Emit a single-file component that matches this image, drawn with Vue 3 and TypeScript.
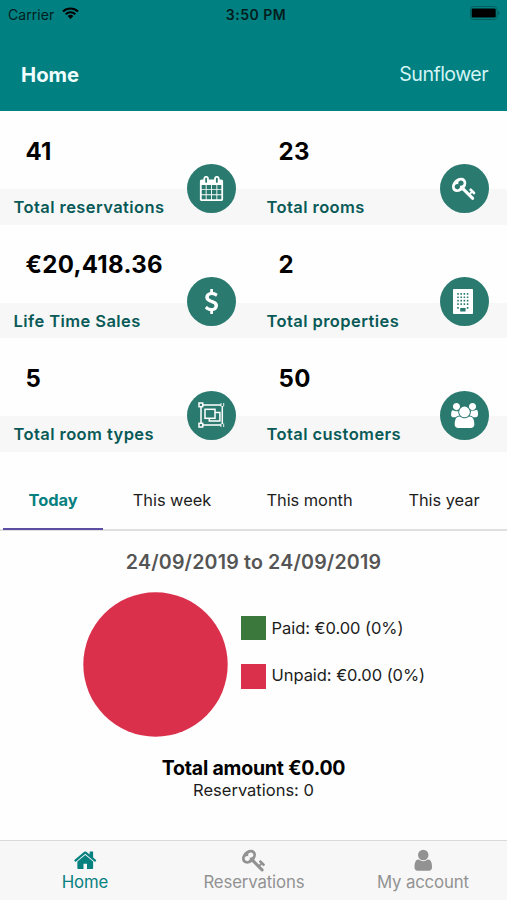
<script setup lang="ts">
import { ref } from 'vue'

interface Stat {
  value: string
  label: string
  icon: string
}

const keyPath =
  'M832 512q0-80-56-136t-136-56-136 56-56 136q0 42 19 83-41-19-83-19-80 0-136 56t-56 136 56 136 136 56 136-56 56-136q0-42-19-83 41 19 83 19 80 0 136-56t56-136zm851 704q0 17-49 66t-66 49q-9 0-28.5-16t-36.5-33-38.5-40-24.5-26l-96 96 220 220q28 28 28 68 0 42-39 81t-81 39q-40 0-68-28l-671-671q-176 131-365 131-163 0-265.5-102.5t-102.5-265.5q0-160 95-313t248-248 313-95q163 0 265.5 102.5t102.5 265.5q0 189-131 365l355 355 96-96q-3-3-26-24.5t-40-38.5-33-36.5-16-28.5q0-17 49-66t66-49q13 0 23 10 6 6 46 44.5t82 79.5 86.5 86 73 78 28.5 41z'

const paths: Record<string, string> = {
  calendar:
    'M192 1664h288v-288h-288v288zm352 0h320v-288h-320v288zm-352-352h288v-320h-288v320zm352 0h320v-320h-320v320zm-352-384h288v-288h-288v288zm736 736h320v-288h-320v288zm-384-736h320v-288h-320v288zm768 736h288v-288h-288v288zm-384-352h320v-320h-320v320zm-352-864v-288q0-13-9.5-22.5t-22.5-9.5h-64q-13 0-22.5 9.5t-9.5 22.5v288q0 13 9.5 22.5t22.5 9.5h64q13 0 22.5-9.5t9.5-22.5zm736 864h288v-320h-288v320zm-384-384h320v-288h-320v288zm384 0h288v-288h-288v288zm32-480v-288q0-13-9.5-22.5t-22.5-9.5h-64q-13 0-22.5 9.5t-9.5 22.5v288q0 13 9.5 22.5t22.5 9.5h64q13 0 22.5-9.5t9.5-22.5zm384-64v1280q0 52-38 90t-90 38h-1408q-52 0-90-38t-38-90v-1280q0-52 38-90t90-38h128v-96q0-66 47-113t113-47h64q66 0 113 47t47 113v96h384v-96q0-66 47-113t113-47h64q66 0 113 47t47 113v96h128q52 0 90 38t38 90z',
  key: keyPath,
  dollar:
    'M1362 1185q0 153-99.5 263.5t-258.5 136.5v175q0 14-9 23t-23 9h-135q-13 0-22.5-9.5t-9.5-22.5v-175q-66-9-127.5-31t-101.5-44.5-74-48-46.5-37.5-17.5-18q-17-21-2-41l103-135q7-10 23-12 15-2 24 9l2 2q113 99 243 125 37 8 74 8 81 0 142.5-43t61.5-122q0-28-15-53t-33.5-42-58.5-37.5-66-32-80-32.5q-39-16-61.5-25t-61.5-26.5-62.5-31-56.5-35.5-53.5-42.5-43.5-49-35.5-58-21-66.5-8.5-78q0-138 98-242t255-134v-180q0-13 9.5-22.5t22.5-9.5h135q14 0 23 9t9 23v176q57 6 110.5 23t87 33.5 63.5 37.5 39 29 15 14q17 18 5 38l-81 146q-8 15-23 16-14 3-27-7-3-3-14.5-12t-39-26.5-58.5-32-74.5-26-85.5-11.5q-95 0-155 43t-60 111q0 26 8.5 48t29.5 41.5 39.5 33 56 31 60.5 27 70 27.5q53 20 81 31.5t76 35 75.5 42.5 62 50 53 63.5 31.5 76.5 13 94z',
  users:
    'M593 896q-162 5-265 128h-134q-82 0-138-40.5t-56-118.5q0-353 124-353 6 0 43.5 21t97.5 42.5 119 21.5q67 0 133-23-5 37-5 66 0 159 93 293zm1071 637q0 120-73 189.5t-194 69.5h-874q-121 0-194-69.5t-73-189.5q0-53 3.5-103.5t14-109 26.5-108.5 43-97.5 62-81 85.5-53.5 111.5-20q10 0 43 21.5t73 48 107 48 135 21.5 135-21.5 107-48 73-48 43-21.5q61 0 111.5 20t85.5 53.5 62 81 43 97.5 26.5 108.5 14 109 3.5 103.5zm-1024-1277q0 106-75 181t-181 75-181-75-75-181 75-181 181-75 181 75 75 181zm704 384q0 159-112.5 271.5t-271.5 112.5-271.5-112.5-112.5-271.5 112.5-271.5 271.5-112.5 271.5 112.5 112.5 271.5zm576 225q0 78-56 118.5t-138 40.5h-134q-103-123-265-128 93-134 93-293 0-29-5-66 66 23 133 23 59 0 119-21.5t97.5-42.5 43.5-21q124 0 124 353zm-128-609q0 106-75 181t-181 75-181-75-75-181 75-181 181-75 181 75 75 181z',
  home:
    'M1472 992v480q0 26-19 45t-45 19h-384v-384h-256v384h-384q-26 0-45-19t-19-45v-480q0-1 .5-3t.5-3l575-474 575 474q1 2 1 6zm223-69l-62 74q-8 9-21 11h-3q-13 0-21-7l-692-577-692 577q-12 8-24 7-13-2-21-11l-62-74q-8-10-7-23.5t11-21.5l719-599q32-26 76-26t76 26l244 204v-195q0-14 9-23t23-9h192q14 0 23 9t9 23v408l219 182q10 8 11 21.5t-7 23.5z',
  user:
    'M1536 1399q0 109-62.5 187t-150.5 78h-854q-88 0-150.5-78t-62.5-187q0-85 8.5-160.5t31.5-152 58.5-131 94-89 134.5-34.5q131 128 313 128t313-128q76 0 134.5 34.5t94 89 58.5 131 31.5 152 8.5 160.5zm-256-887q0 159-112.5 271.5t-271.5 112.5-271.5-112.5-112.5-271.5 112.5-271.5 271.5-112.5 271.5 112.5 112.5 271.5z',
}

const stats: Stat[] = [
  { value: '41', label: 'Total reservations', icon: 'calendar' },
  { value: '23', label: 'Total rooms', icon: 'key' },
  { value: '€20,418.36', label: 'Life Time Sales', icon: 'dollar' },
  { value: '2', label: 'Total properties', icon: 'building' },
  { value: '5', label: 'Total room types', icon: 'group' },
  { value: '50', label: 'Total customers', icon: 'users' },
]

const periods = ['Today', 'This week', 'This month', 'This year']
const activePeriod = ref(0)

const legend = [
  { kind: 'paid', text: 'Paid: €0.00 (0%)' },
  { kind: 'unpaid', text: 'Unpaid: €0.00 (0%)' },
]

const nav = [
  { label: 'Home', icon: 'home' },
  { label: 'Reservations', icon: 'key' },
  { label: 'My account', icon: 'user' },
]
const activeNav = ref(0)

const windowRows = [5, 8.4, 11.8, 15.2]
const windowCols = [4.2, 7.4, 10.6, 13.8]
</script>

<template>
  <div class="screen">
    <header class="header">
      <div class="status">
        <div class="carrier">
          <span>Carrier</span>
          <svg class="wifi" viewBox="0 0 17 12">
            <path d="M1 4.4a11 11 0 0 1 15 0M3.7 7.2a7 7 0 0 1 9.6 0" />
            <path class="dot" d="M8.5 12 5.6 9.1a4.2 4.2 0 0 1 5.8 0z" />
          </svg>
        </div>
        <span class="clock">3:50 PM</span>
        <svg class="battery" viewBox="0 0 30 14">
          <rect class="shell" x=".5" y=".5" width="26.5" height="13" rx="3" />
          <rect x="1.7" y="2.4" width="24" height="9" rx="1.2" />
          <path class="cap" d="M28 4.7q1.6.7 1.6 2.3T28 9.3z" />
        </svg>
      </div>
      <div class="title-row">
        <h1>Home</h1>
        <span class="hotel">Sunflower</span>
      </div>
    </header>

    <section class="stats">
      <article v-for="s in stats" :key="s.label" class="stat">
        <div class="value">{{ s.value }}</div>
        <div class="label">{{ s.label }}</div>
        <div class="badge">
          <svg v-if="s.icon === 'building'" class="building" viewBox="0 0 20 25">
            <rect width="20" height="25" rx=".8" fill="#fff" />
            <g fill="#2a7a70">
              <template v-for="y in windowRows" :key="y">
                <rect v-for="x in windowCols" :key="x" :x="x" :y="y - 1" width="1.6" height="1.7" rx=".3" />
              </template>
              <rect x="4.2" y="18" width="1.6" height="1.7" rx=".3" />
              <rect x="13.8" y="18" width="1.6" height="1.7" rx=".3" />
              <rect x="7.2" y="19" width="5.4" height="3.6" rx=".5" />
            </g>
          </svg>
          <svg v-else-if="s.icon === 'group'" class="group" viewBox="0 0 28 26">
            <g fill="none" stroke="#fff" stroke-width="1.5">
              <path d="M5 3h18M5 23h18M3 5v16M24.3 4v18" />
              <rect x="1" y="1" width="3.7" height="3.7" />
              <rect x="1" y="21.3" width="3.7" height="3.7" />
              <path d="M23 1v3.5M23 25v-3.5M25.7 1v3.5M25.7 25v-3.5" stroke-width=".9" />
              <rect x="7" y="7.3" width="10" height="9" />
              <path d="M17 10.5h4.9v8.6H11.3V16.3" />
            </g>
          </svg>
          <svg v-else-if="s.icon === 'users'" class="users" viewBox="0 0 1920 1792">
            <path :d="paths.users" />
          </svg>
          <svg v-else class="glyph" viewBox="0 0 1792 1792"><path :d="paths[s.icon]" /></svg>
        </div>
      </article>
    </section>

    <nav class="periods">
      <button
        v-for="(p, i) in periods"
        :key="p"
        :class="['period', { active: i === activePeriod }]"
        @click="activePeriod = i"
      >
        {{ p }}
      </button>
    </nav>

    <main class="report">
      <h2>24/09/2019 to 24/09/2019</h2>
      <div class="chart">
        <svg class="pie" viewBox="0 0 145 145"><circle cx="72.5" cy="72.5" r="72.2" /></svg>
        <ul class="legend">
          <li v-for="l in legend" :key="l.kind">
            <span :class="['swatch', l.kind]"></span>
            <span class="entry">{{ l.text }}</span>
          </li>
        </ul>
      </div>
      <div class="total">Total amount €0.00</div>
      <div class="count">Reservations: 0</div>
    </main>

    <footer class="tabbar">
      <button
        v-for="(n, i) in nav"
        :key="n.label"
        :class="['tab', n.icon, { active: i === activeNav }]"
        @click="activeNav = i"
      >
        <svg class="tab-icon" viewBox="0 0 1792 1792"><path :d="paths[n.icon]" /></svg>
        <span>{{ n.label }}</span>
      </button>
    </footer>
  </div>
</template>

<style>
body {
  margin: 0;
  background: #fff;
}
</style>

<style scoped>
.screen {
  display: flex;
  flex-direction: column;
  width: 507px;
  height: 900px;
  overflow: hidden;
  background: #fefefe;
  color: #000;
  font-family: Inter, 'Liberation Sans', sans-serif;
}
button {
  padding: 0;
  border: 0;
  background: none;
  font: inherit;
  color: inherit;
}
.header {
  flex: none;
  height: 110.5px;
  background: #008080;
}
.status {
  display: grid;
  grid-template-columns: 1fr auto 1fr;
  align-items: center;
  height: 28px;
  padding: 0 7px 0 8px;
  font-size: 14px;
  color: #021d1d;
}
.carrier {
  display: flex;
  align-items: center;
  gap: 8px;
  letter-spacing: 0.05px;
}
.wifi {
  width: 17px;
  height: 12px;
  margin-top: -2px;
  fill: none;
  stroke: #000;
  stroke-width: 2.1;
}
.wifi .dot {
  fill: #000;
  stroke: none;
}
.clock {
  padding-left: 4px;
  font-weight: 600;
  letter-spacing: 0.5px;
}
.battery {
  justify-self: end;
  width: 30px;
  height: 14px;
  margin-top: -2px;
}
.battery .shell {
  fill: none;
  stroke: #065f5f;
}
.battery .cap {
  fill: #065f5f;
}
.title-row {
  display: flex;
  align-items: center;
  justify-content: space-between;
  height: 92px;
  padding: 0 19px 0 21px;
  color: #effdfd;
}
h1 {
  margin: 0;
  font-size: 20.3px;
  font-weight: 700;
}
.hotel {
  font-size: 19.6px;
  letter-spacing: -0.55px;
  color: #d3f4f4;
}
.stats {
  display: grid;
  flex: none;
  grid-template-columns: 253px 254px;
  grid-auto-rows: 113.5px;
}
.stat {
  position: relative;
}
.value {
  height: 78.5px;
  padding-left: 25.5px;
  box-sizing: border-box;
  font-size: 24px;
  font-weight: 700;
  letter-spacing: 0.3px;
  line-height: 81px;
}
.label {
  height: 35.5px;
  padding-left: 13.5px;
  background: #f7f7f7;
  color: #095a57;
  font-size: 16.5px;
  font-weight: 600;
  letter-spacing: 0.42px;
  line-height: 36.7px;
}
.badge {
  position: absolute;
  top: 53px;
  left: 186.5px;
  display: flex;
  align-items: center;
  justify-content: center;
  width: 49px;
  height: 49px;
  border-radius: 50%;
  background: #2a7a70;
}
.badge svg {
  height: 25px;
  fill: #fff;
}
.glyph {
  width: 25px;
}
.users {
  width: 27px;
}
.building {
  width: 20px;
  margin-right: 2px;
}
.badge .group {
  width: 28px;
  height: 26px;
  margin-left: 1px;
}
.periods {
  display: grid;
  flex: none;
  grid-template-columns: 103px 138px 137px 129px;
  height: 79.5px;
  box-sizing: border-box;
  padding-top: 17px;
  border-bottom: 2.5px solid #dfdfdf;
}
.period {
  position: relative;
  padding-top: 3px;
  font-size: 16.4px;
  letter-spacing: -0.03px;
  color: #1c1c1c;
  white-space: nowrap;
}
.period:last-child {
  padding-left: 3px;
}
.period.active {
  padding-left: 3px;
  color: #078080;
  font-weight: 700;
}
.period.active::after {
  content: '';
  position: absolute;
  right: 0;
  bottom: -1.5px;
  left: 3px;
  height: 2px;
  background: #5c4ea3;
}
.report {
  flex: 1;
  text-align: center;
}
h2 {
  margin: 0;
  padding-top: 18px;
  color: #555;
  font-size: 19.6px;
  font-weight: 600;
  letter-spacing: 0.18px;
  line-height: 26px;
}
.chart {
  display: flex;
  gap: 13px;
  margin-top: 17.5px;
  padding-left: 83px;
}
.pie {
  width: 145px;
  height: 145px;
  fill: #da304c;
}
.legend {
  display: flex;
  flex-direction: column;
  gap: 24px;
  margin: 0;
  padding: 23.5px 0 0;
  list-style: none;
}
.legend li {
  display: flex;
  gap: 6px;
  align-items: center;
  height: 24.5px;
}
.swatch {
  width: 24.5px;
  height: 24.5px;
}
.paid {
  background: #3b783b;
}
.unpaid {
  background: #da304c;
}
.entry {
  font-size: 16.5px;
  letter-spacing: -0.05px;
  line-height: 22px;
  color: #1c1c1c;
}
.unpaid + .entry {
  margin-top: -2px;
}
.total {
  margin-top: 19px;
  font-size: 19.5px;
  font-weight: 700;
  letter-spacing: -0.2px;
  line-height: 24px;
}
.count {
  font-size: 16.5px;
  line-height: 20px;
  color: #1c1c1c;
}
.tabbar {
  display: grid;
  flex: none;
  grid-template-columns: repeat(3, 1fr);
  height: 60px;
  box-sizing: border-box;
  border-top: 1.5px solid #dadada;
  background: #f7f7f7;
}
.tab {
  display: flex;
  flex-direction: column;
  align-items: center;
  padding: 6.5px 0 0 0.8px;
  color: #929292;
  font-size: 16.8px;
  letter-spacing: -0.15px;
  line-height: 20px;
}
.tab.active {
  color: #078080;
}
.tab-icon {
  width: 24.5px;
  height: 24.5px;
  fill: currentColor;
}
</style>
